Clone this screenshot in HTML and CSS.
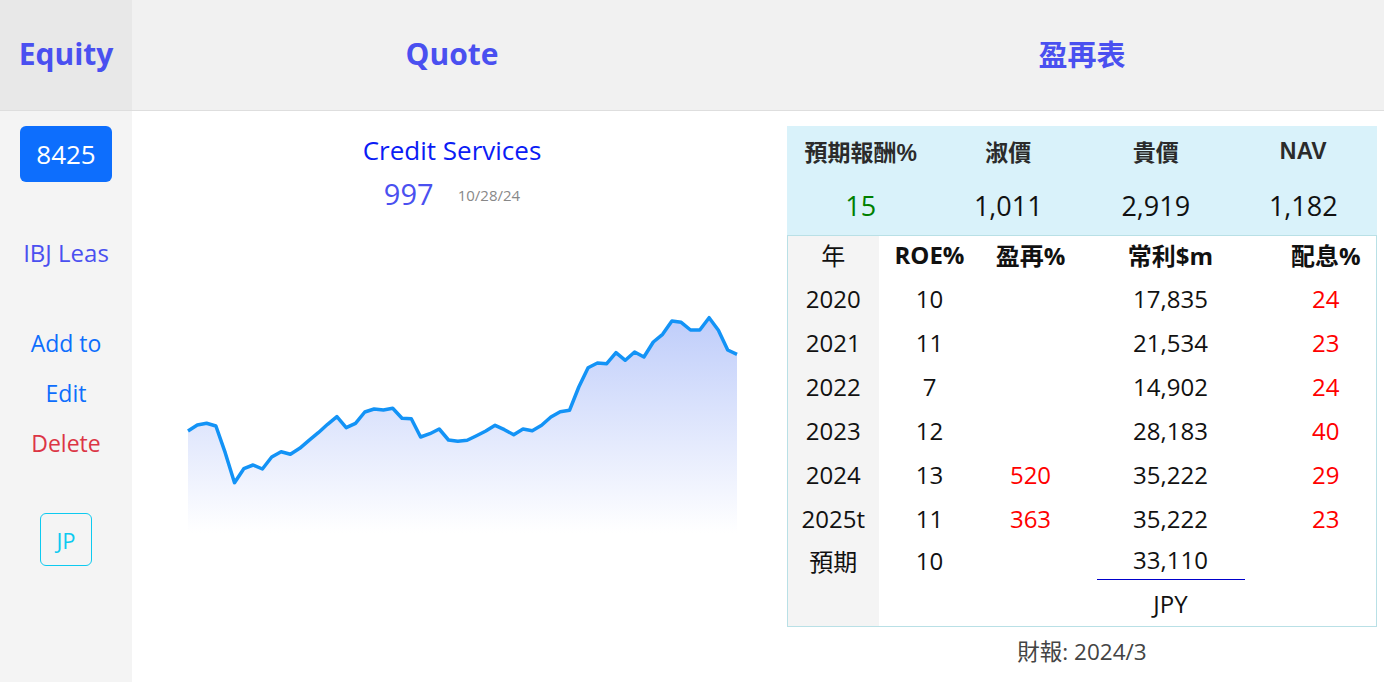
FILE: index.html
```html
<!DOCTYPE html>
<html lang="zh-Hant">
<head>
    <meta charset="UTF-8">
    <meta name="viewport" content="width=device-width, initial-scale=1.0">
    <title>Equity Quote</title>
    <link rel="stylesheet" href="styles.css">
</head>
<body>
    <div class="app">
        <div class="head head-side">Equity</div>
        <div class="head head-quote">Quote</div>
        <div class="head head-table">盈再表</div>

        <aside class="side">
            <div class="code-btn">8425</div>
            <div class="side-name">IBJ Leas</div>
            <div class="side-link add">Add to</div>
            <div class="side-link edit">Edit</div>
            <div class="side-link delete">Delete</div>
            <div class="market-btn">JP</div>
        </aside>

        <section class="quote">
            <div class="sector">Credit Services</div>
            <div class="price-row">
                <span class="price">997</span>
                <span class="price-date">10/28/24</span>
            </div>
            <svg class="chart" width="640" height="240" viewBox="0 0 640 240">
                <defs>
                    <linearGradient id="area" x1="0" y1="0" x2="0" y2="1">
                        <stop offset="0%" stop-color="#bfcdfa"/>
                        <stop offset="100%" stop-color="#ffffff"/>
                    </linearGradient>
                </defs>
                <polygon class="chart-area" points="56,130 65.3,124 74.6,122.3 83.9,125 93.2,151.7 102.5,181.7 111.8,167.7 121.1,164 130.4,168 139.7,156 149.1,150.7 158.4,153.3 167.7,147.3 177,139.3 186.3,131.7 195.6,123.3 204.9,115.7 214.2,126.7 223.5,122.3 232.8,111 242.1,108 251.4,109 260.7,107.3 270,117.3 279.3,117.7 288.6,136 297.9,132.7 307.2,128 316.5,139 325.8,140.3 335.2,139.3 344.5,134.7 353.8,130 363.1,124.3 372.4,128.7 381.7,133.7 391,128 400.3,129.7 409.6,124.3 418.9,116 428.2,110.7 437.5,109.3 446.8,86 456.1,66.7 465.4,62 474.7,62.7 484,51.7 493.3,59.3 502.6,51 511.9,56 521.3,41 530.6,33.3 539.9,20 549.2,21.3 558.5,29 567.8,29 577.1,16.7 586.4,29.3 595.7,49 605,53.3 605,232 56,232"/>
                <polyline class="chart-line" points="56,130 65.3,124 74.6,122.3 83.9,125 93.2,151.7 102.5,181.7 111.8,167.7 121.1,164 130.4,168 139.7,156 149.1,150.7 158.4,153.3 167.7,147.3 177,139.3 186.3,131.7 195.6,123.3 204.9,115.7 214.2,126.7 223.5,122.3 232.8,111 242.1,108 251.4,109 260.7,107.3 270,117.3 279.3,117.7 288.6,136 297.9,132.7 307.2,128 316.5,139 325.8,140.3 335.2,139.3 344.5,134.7 353.8,130 363.1,124.3 372.4,128.7 381.7,133.7 391,128 400.3,129.7 409.6,124.3 418.9,116 428.2,110.7 437.5,109.3 446.8,86 456.1,66.7 465.4,62 474.7,62.7 484,51.7 493.3,59.3 502.6,51 511.9,56 521.3,41 530.6,33.3 539.9,20 549.2,21.3 558.5,29 567.8,29 577.1,16.7 586.4,29.3 595.7,49 605,53.3"/>
            </svg>
        </section>

        <section class="report">
            <div class="summary">
                <div class="sum-head">預期報酬%</div>
                <div class="sum-head">淑價</div>
                <div class="sum-head">貴價</div>
                <div class="sum-head">NAV</div>
                <div class="sum-val green">15</div>
                <div class="sum-val">1,011</div>
                <div class="sum-val">2,919</div>
                <div class="sum-val">1,182</div>
            </div>

            <table class="earnings">
                <colgroup>
                    <col class="col-year">
                    <col class="col-roe">
                    <col class="col-reinv">
                    <col class="col-profit">
                    <col class="col-div">
                </colgroup>
                <thead>
                    <tr>
                        <th class="year">年</th>
                        <th>ROE%</th>
                        <th>盈再%</th>
                        <th>常利$m</th>
                        <th class="div">配息%</th>
                    </tr>
                </thead>
                <tbody>
                    <tr><td class="year">2020</td><td>10</td><td></td><td>17,835</td><td class="div red">24</td></tr>
                    <tr><td class="year">2021</td><td>11</td><td></td><td>21,534</td><td class="div red">23</td></tr>
                    <tr><td class="year">2022</td><td>7</td><td></td><td>14,902</td><td class="div red">24</td></tr>
                    <tr><td class="year">2023</td><td>12</td><td></td><td>28,183</td><td class="div red">40</td></tr>
                    <tr><td class="year">2024</td><td>13</td><td class="red">520</td><td>35,222</td><td class="div red">29</td></tr>
                    <tr><td class="year">2025t</td><td>11</td><td class="red">363</td><td>35,222</td><td class="div red">23</td></tr>
                    <tr class="row-est"><td class="year">預期</td><td>10</td><td></td><td><div class="underline">33,110</div></td><td class="div"></td></tr>
                    <tr class="row-cur"><td class="year"></td><td></td><td></td><td>JPY</td><td class="div"></td></tr>
                </tbody>
            </table>

            <div class="report-date">財報: 2024/3</div>
        </section>
    </div>
</body>
</html>
```

FILE: styles.css
```css
html, body {
    margin: 0;
    padding: 0;
    height: 100%;
}
body {
    font-family: "Open Sans", "Noto Sans CJK TC", sans-serif;
    color: #111;
    background: #fff;
}
.app {
    display: grid;
    grid-template-columns: 132px 640px 1fr;
    grid-template-rows: 111px 1fr;
    height: 682px;
}

/* top bar */
.head {
    background: #f1f1f1;
    border-bottom: 1px solid #dedede;
    color: #4a50f0;
    font-weight: bold;
    font-size: 30px;
    display: flex;
    align-items: center;
    justify-content: center;
    padding-bottom: 4px;
    box-sizing: border-box;
}
.head-side {
    background: #e8e8e8;
}
.head-table {
    font-size: 29px;
    padding-left: 8px;
}

/* left column */
.side {
    background: #f4f4f4;
    display: flex;
    flex-direction: column;
    align-items: center;
    font-size: 23px;
}
.code-btn {
    margin-top: 15px;
    width: 92px;
    height: 56px;
    background: #0d6efd;
    color: white;
    border-radius: 6px;
    font-size: 26px;
    display: flex;
    align-items: center;
    justify-content: center;
}
.side-name {
    margin-top: 56px;
    line-height: 30px;
    font-size: 24px;
    color: #4a50f0;
}
.side-link {
    line-height: 30px;
    margin-top: 20px;
    color: #0d6efd;
}
.side-link.add {
    margin-top: 60px;
}
.side-link.delete {
    color: #dc3545;
}
.market-btn {
    margin-top: 55px;
    width: 50px;
    height: 51px;
    border: 1px solid #0dcaf0;
    border-radius: 6px;
    color: #0dcaf0;
    font-size: 22px;
    display: flex;
    align-items: center;
    justify-content: center;
}

/* quote column */
.quote {
    text-align: center;
}
.sector {
    margin-top: 21px;
    font-size: 26px;
    line-height: 36px;
    color: #0b1cf5;
}
.price-row {
    margin-top: 6px;
    line-height: 40px;
}
.price {
    font-size: 29px;
    color: #4a50f0;
}
.price-date {
    font-size: 15px;
    color: #888;
    margin-left: 20px;
    vertical-align: 4px;
}
.chart {
    display: block;
    margin-top: 82px;
}
.chart-area {
    fill: url(#area);
}
.chart-line {
    fill: none;
    stroke: #1393f6;
    stroke-width: 3.5;
    stroke-linejoin: round;
}

/* report column */
.report {
    padding: 15px 7px 0 15px;
}
.summary {
    background: #d9f2fa;
    display: grid;
    grid-template-columns: repeat(4, 1fr);
    grid-template-rows: 50px 59px;
    text-align: center;
}
.sum-head {
    font-family: "Liberation Sans", "Noto Sans CJK TC", sans-serif;
    font-weight: bold;
    font-size: 23px;
    color: #2b2b2b;
    display: flex;
    align-items: center;
    justify-content: center;
}
.sum-val {
    font-size: 27px;
    color: #111;
    display: flex;
    align-items: center;
    justify-content: center;
}
.green {
    color: #008000 !important;
}
.earnings {
    width: 100%;
    border-collapse: collapse;
    border: 1px solid #b9e0e6;
    table-layout: fixed;
    font-size: 24px;
}
.col-year { width: 91px; }
.col-roe { width: 102px; }
.col-reinv { width: 100px; }
.col-profit { width: 180px; }
.earnings th,
.earnings td {
    padding: 0;
    text-align: center;
    font-weight: normal;
}
.earnings th {
    height: 37px;
    padding-bottom: 3px;
    font-weight: bold;
}
.earnings td {
    height: 44px;
}
.earnings .year {
    background: #f4f4f4;
}
.earnings th.year {
    font-weight: normal;
}
.earnings .div {
    padding-left: 15px;
}
.earnings .red {
    color: #ff0000;
}
.earnings .row-est td {
    height: 40px;
}
.underline {
    margin: 0 16px;
    line-height: 38px;
    border-bottom: 1px solid #0000cc;
}
.earnings .row-cur td {
    height: 46px;
}
.report-date {
    margin-top: 10px;
    text-align: center;
    font-size: 22.5px;
    line-height: 30px;
    color: #444;
}
```
